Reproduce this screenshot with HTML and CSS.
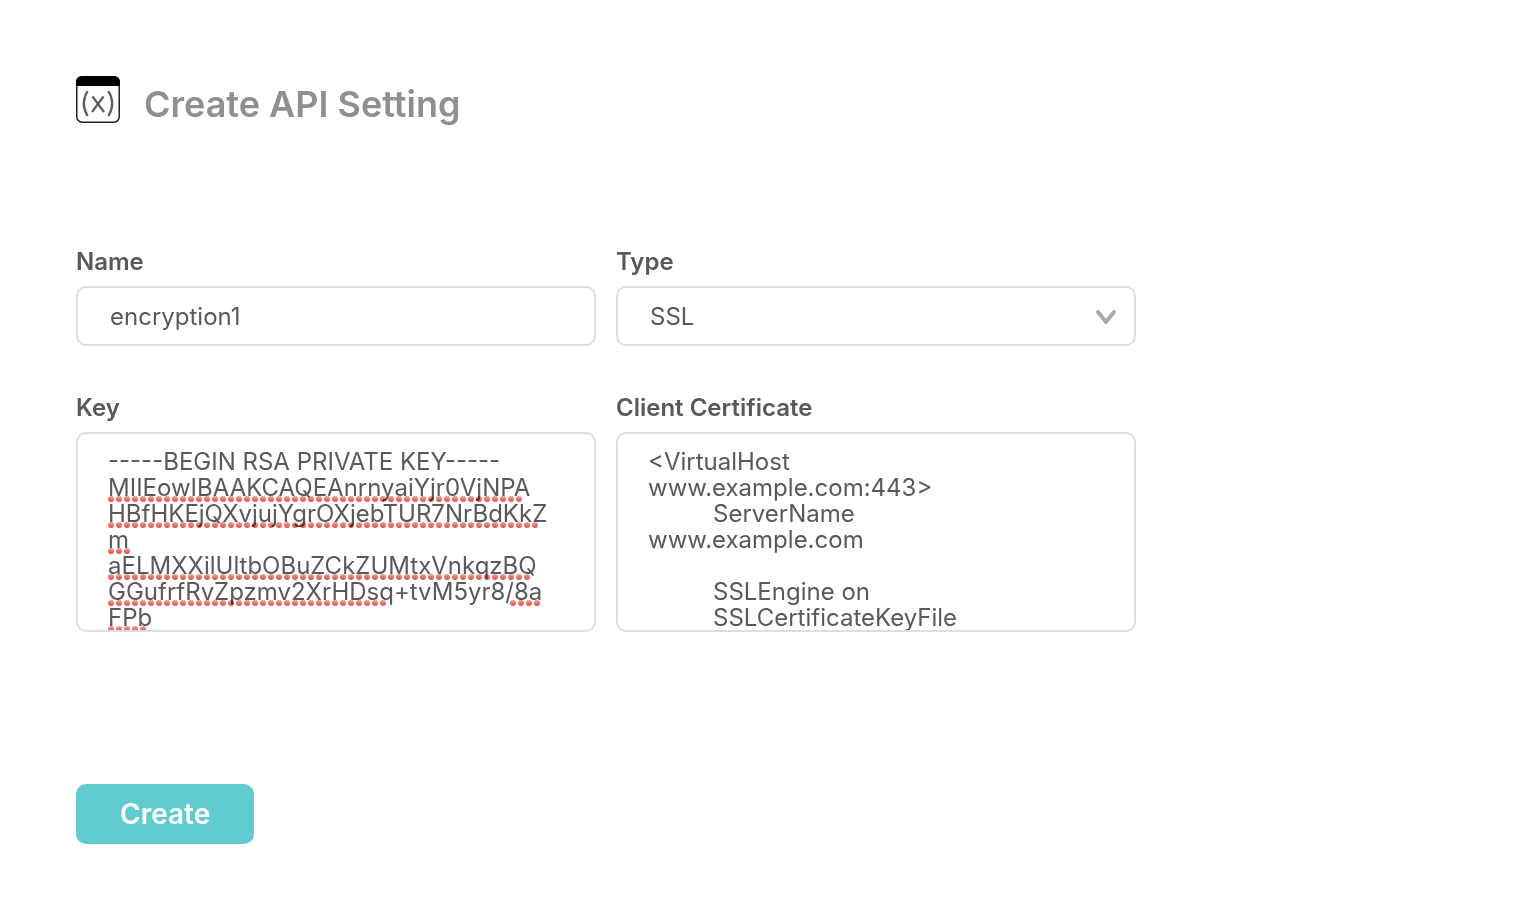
FILE: index.html
```
<!DOCTYPE html>
<html lang="en">
<head>
<meta charset="utf-8">
<title>Create API Setting</title>
<link rel="stylesheet" href="styles.css">
</head>
<body>
<main class="page">
  <header class="heading">
    <svg class="heading-icon" viewBox="0 0 44 47" fill="none" aria-hidden="true">
      <rect x=".75" y=".75" width="42.5" height="45.5" rx="5.5" stroke="#222" stroke-width="1.5"/>
      <path d="M0 10V6a6 6 0 0 1 6-6h32a6 6 0 0 1 6 6v4z" fill="#000"/>
      <path d="M11.600 15Q4 27.500 11.600 40M32.400 15Q40 27.500 32.400 40M16.500 20.500L28 36M27.500 20.500L16 36" stroke="#5c5c5c" stroke-width="2.200"/>
    </svg>
    <h1 class="title">Create API Setting</h1>
  </header>
  <form class="form">
    <div class="fields">
      <div class="field">
        <label class="label" for="name">Name</label>
        <input class="control" id="name" type="text" value="encryption1">
      </div>
      <div class="field">
        <label class="label" for="type">Type</label>
        <div class="wrap">
          <select class="control" id="type"><option>SSL</option></select>
          <svg class="chevron" viewBox="0 0 22 16" fill="none" aria-hidden="true"><path d="M3 3l8 10 8-10" stroke="#aaa" stroke-width="4" stroke-linecap="round" stroke-linejoin="round"/></svg>
        </div>
      </div>
      <div class="field">
        <label class="label" for="key">Key</label>
        <div class="wrap">
          <textarea class="control area" id="key" spellcheck="false">-----BEGIN RSA PRIVATE KEY-----
MIIEowIBAAKCAQEAnrnyaiYjr0VjNPA
HBfHKEjQXvjujYgrOXjebTUR7NrBdKkZ
m
aELMXXilUltbOBuZCkZUMtxVnkqzBQ
GGufrfRvZpzmv2XrHDsq+tvM5yr8/8a
FPb</textarea>
          <svg class="spelling" viewBox="0 0 450 196" aria-hidden="true">
            <defs>
              <linearGradient id="dot" gradientUnits="userSpaceOnUse" x1="0" y1="62" x2="0" y2="88" spreadMethod="repeat">
                <stop offset="0" stop-color="#f4a29b"/><stop offset=".23" stop-color="#e8493f"/><stop offset="1" stop-color="#e8493f"/>
              </linearGradient>
            </defs>
            <path d="M3 65H412M3 91H428M3 117H20M3 143H420M3 169H276M405 169H430M3 195H36" fill="none" stroke="url(#dot)" stroke-width="6" stroke-linecap="round" stroke-dasharray="0 8"/>
          </svg>
        </div>
      </div>
      <div class="field">
        <label class="label" for="cert">Client Certificate</label>
        <textarea class="control area" id="cert" spellcheck="false">&lt;VirtualHost
www.example.com:443&gt;
	ServerName
www.example.com

	SSLEngine on
	SSLCertificateKeyFile</textarea>
      </div>
    </div>
    <button class="submit" type="button">Create</button>
  </form>
</main>
</body>
</html>
```
FILE: styles.css
```
* {
  box-sizing: border-box;
}

body {
  margin: 0;
  background: #fff;
  color: #595959;
  font-family: Inter, "Liberation Sans", sans-serif;
}

.page {
  max-width: 1212px;
  padding: 76px;
}

.heading {
  display: flex;
  align-items: flex-start;
  gap: 24px;
}

.heading-icon {
  width: 44px;
  height: 47px;
}

.title {
  margin: 0;
  padding-top: 8px;
  color: #8f8f8f;
  font-size: 36px;
  font-weight: 600;
  line-height: 40px;
}

.form {
  padding-top: 121px;
}

.fields {
  display: grid;
  grid-template-columns: 1fr 1fr;
  gap: 45px 20px;
}

.field {
  display: flex;
  flex-direction: column;
  gap: 7px;
}

.label {
  font-size: 24px;
  font-weight: 600;
  line-height: 34px;
}

.wrap {
  position: relative;
}

.control {
  display: block;
  width: 100%;
  height: 60px;
  padding: 0 32px;
  border: 2px solid #dedede;
  border-radius: 10px;
  background: #fff;
  color: #595959;
  font-family: inherit;
  font-size: 24px;
  appearance: none;
}

.area {
  height: 200px;
  padding: 15px 30px;
  line-height: 26px;
  resize: none;
  overflow: hidden;
  tab-size: 65px;
  white-space: pre-wrap;
}

.chevron {
  position: absolute;
  top: 23px;
  right: 19px;
  width: 22px;
  height: 16px;
  pointer-events: none;
}

.spelling {
  position: absolute;
  top: 2px;
  left: 32px;
  width: 450px;
  height: 196px;
  pointer-events: none;
  mix-blend-mode: multiply;
}

.submit {
  display: block;
  margin-top: 152px;
  padding: 0 44px;
  border: 0;
  border-radius: 10px;
  background: #62cbcf;
  color: #fff;
  font-family: inherit;
  font-size: 28px;
  font-weight: 600;
  line-height: 60px;
}
```
